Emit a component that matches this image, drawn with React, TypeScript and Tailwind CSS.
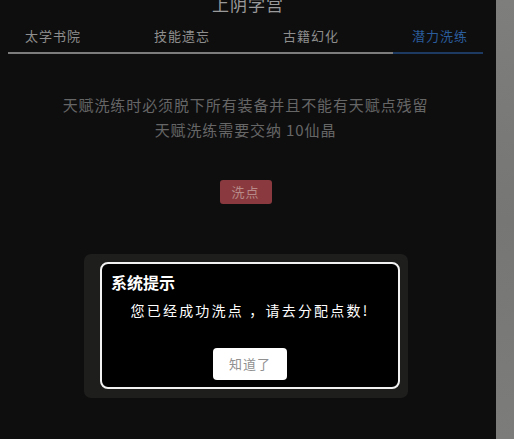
import React from "react";

const tabs = ["太学书院", "技能遗忘", "古籍幻化", "潜力洗练"];

const font = {
  fontFamily: '"Noto Sans CJK SC", "Noto Sans", sans-serif',
};

export default function App() {
  return (
    <div
      className="relative flex h-[439px] w-[514px] overflow-hidden bg-[#7b7b79]"
      style={font}
    >
      {/* main panel */}
      <div className="flex h-full w-[496px] flex-col bg-[#0e0e0f]">
        <div className="mt-[-6px] text-center text-[17px] leading-[20px] tracking-[1px] text-[#9a9a9a]">
          上阴学宫
        </div>

        {/* tabs */}
        <div className="mt-[14px] flex gap-[74px] pl-[25px] text-[13px] leading-[16px] tracking-[1px]">
          {tabs.map((t, i) => (
            <span
              key={t}
              className={
                i === 3
                  ? "w-[55px] whitespace-nowrap text-[#2b5d9c]"
                  : "w-[55px] whitespace-nowrap text-[#8e8e8e]"
              }
            >
              {t}
            </span>
          ))}
        </div>
        <div className="ml-[8px] mt-[8px] flex h-[2px] w-[475px]">
          <div className="h-full w-[385px] bg-[#7c7c7c]" />
          <div className="h-full flex-1 bg-[#1d3a63]" />
        </div>

        {/* description */}
        <div className="ml-[8px] mt-[38px] w-[475px] text-center text-[15px] leading-[25px] tracking-[0.9px] text-[#666666]">
          <p>天赋洗练时必须脱下所有装备并且不能有天赋点残留</p>
          <p>天赋洗练需要交纳 10仙晶</p>
        </div>

        <div className="ml-[8px] mt-[38px] flex w-[475px] justify-center">
          <button className="h-[24px] w-[52px] rounded-[3px] bg-[#8a3a3e] text-[13px] tracking-[1px] text-[#b88a8a]">
            洗点
          </button>
        </div>
      </div>

      {/* right background strip */}
      <div className="h-full flex-1 bg-gradient-to-b from-[#7e7e7c] via-[#767674] to-[#7c7c7a]" />

      {/* modal */}
      <div className="absolute left-[84px] top-[254px] h-[144px] w-[324px] rounded-[7px] bg-[#1e1e1c] pb-[9px] pl-[16px] pr-[8px] pt-[8px]">
        <div className="flex h-full flex-col rounded-[8px] border-2 border-[#f2f2f2] bg-black">
          <div className="ml-[9px] mt-[8px] text-[16px] font-bold leading-[20px] text-white">
            系统提示
          </div>
          <div className="mt-[8px] text-center text-[14px] leading-[20px] tracking-[2.2px] text-white">
            您已经成功洗点 ，请去分配点数!
          </div>
          <div className="mt-[28px] flex justify-center">
            <button className="h-[32px] w-[74px] rounded-[4px] bg-white text-[13px] tracking-[1px] text-[#909090]">
              知道了
            </button>
          </div>
        </div>
      </div>
    </div>
  );
}
